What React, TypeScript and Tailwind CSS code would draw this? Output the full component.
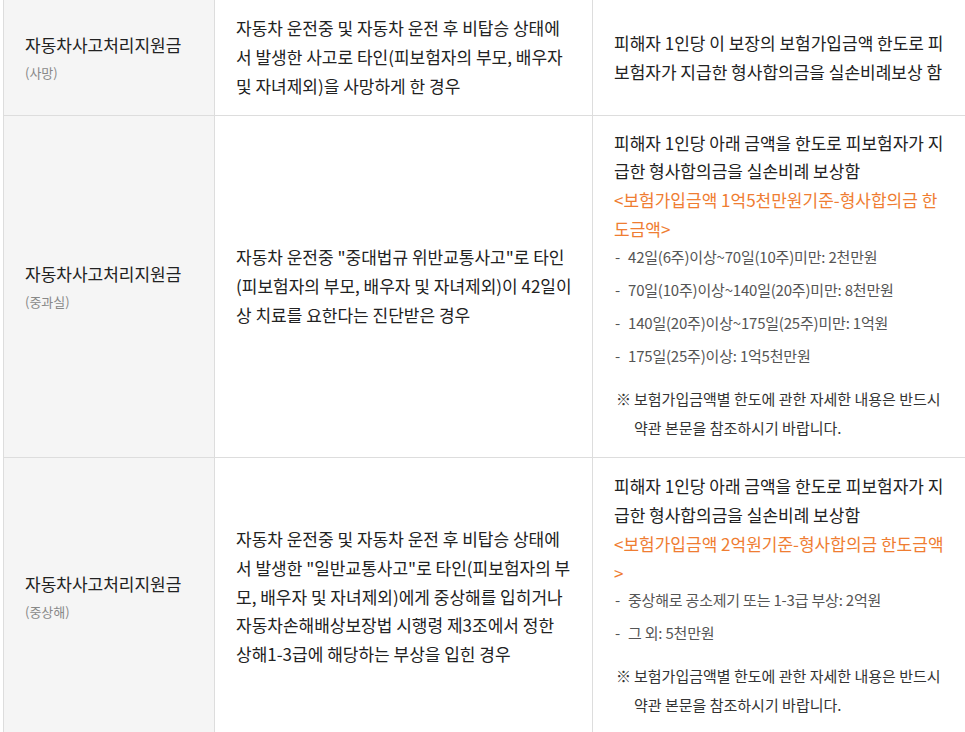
import React from 'react';

interface Coverage {
  title: string;
  sub: string;
  cause: string[];
  limit: string[];
  orange?: string[];
  items?: string[];
  height: string;
}

const NOTE = ['보험가입금액별 한도에 관한 자세한 내용은 반드시', '약관 본문을 참조하시기 바랍니다.'];

const rows: Coverage[] = [
  {
    title: '자동차사고처리지원금',
    sub: '(사망)',
    cause: [
      '자동차 운전중 및 자동차 운전 후 비탑승 상태에',
      '서 발생한 사고로 타인(피보험자의 부모, 배우자',
      '및 자녀제외)을 사망하게 한 경우',
    ],
    limit: ['피해자 1인당 이 보장의 보험가입금액 한도로 피', '보험자가 지급한 형사합의금을 실손비례보상 함'],
    height: 'h-[116px]',
  },
  {
    title: '자동차사고처리지원금',
    sub: '(중과실)',
    cause: [
      '자동차 운전중 "중대법규 위반교통사고"로 타인',
      '(피보험자의 부모, 배우자 및 자녀제외)이 42일이',
      '상 치료를 요한다는 진단받은 경우',
    ],
    limit: ['피해자 1인당 아래 금액을 한도로 피보험자가 지', '급한 형사합의금을 실손비례 보상함'],
    orange: ['<보험가입금액 1억5천만원기준-형사합의금 한', '도금액>'],
    items: [
      '42일(6주)이상~70일(10주)미만: 2천만원',
      '70일(10주)이상~140일(20주)미만: 8천만원',
      '140일(20주)이상~175일(25주)미만: 1억원',
      '175일(25주)이상: 1억5천만원',
    ],
    height: 'h-[342px]',
  },
  {
    title: '자동차사고처리지원금',
    sub: '(중상해)',
    cause: [
      '자동차 운전중 및 자동차 운전 후 비탑승 상태에',
      '서 발생한 "일반교통사고"로 타인(피보험자의 부',
      '모, 배우자 및 자녀제외)에게 중상해를 입히거나',
      '자동차손해배상보장법 시행령 제3조에서 정한',
      '상해1-3급에 해당하는 부상을 입힌 경우',
    ],
    limit: ['피해자 1인당 아래 금액을 한도로 피보험자가 지', '급한 형사합의금을 실손비례 보상함'],
    orange: ['<보험가입금액 2억원기준-형사합의금 한도금액', '>'],
    items: ['중상해로 공소제기 또는 1-3급 부상: 2억원', '그 외: 5천만원'],
    height: 'h-[279px]',
  },
];

const Lines: React.FC<{ lines: string[] }> = ({ lines }) => (
  <>
    {lines.map((l, i) => (
      <React.Fragment key={i}>
        {i > 0 && <br />}
        {l}
      </React.Fragment>
    ))}
  </>
);

export default function App() {
  return (
    <div className="w-[965px] h-[732px] overflow-hidden bg-white font-['Noto_Sans_CJK_KR','Noto_Sans',sans-serif] text-[#222]">
      <div className="ml-[3px] w-[968px]">
        {rows.map((r, idx) => (
          <div key={idx} className={`grid grid-cols-[212px_378px_378px] border-b border-[#ddd] ${r.height}`}>
            <div className="flex flex-col justify-center bg-[#f5f5f5] border-l border-r border-[#ddd] pl-[21px]">
              <div className="text-[17px] leading-[26px]">{r.title}</div>
              <div className="mt-1 text-[13px] leading-[22px] text-[#888]">{r.sub}</div>
            </div>
            <div className="flex items-center border-r border-[#ddd] pl-[21px] pr-[16px]">
              <p className="text-[17px] leading-[28.8px]">
                <Lines lines={r.cause} />
              </p>
            </div>
            <div className={`flex flex-col justify-center pl-[21px] pr-[16px] ${r.items ? 'pb-[2px]' : ''}`}>
              <p className="text-[17px] leading-[28.8px]">
                <Lines lines={r.limit} />
                {r.orange && (
                  <>
                    <br />
                    <span className="text-[#ef7d32]">
                      <Lines lines={r.orange} />
                    </span>
                  </>
                )}
              </p>
              {r.items && (
                <>
                  <ul className="mt-[1px] flex flex-col gap-[9px]">
                    {r.items.map((it) => (
                      <li key={it} className="relative pl-[14px] text-[15px] leading-[24px] text-[#555] tracking-[-0.2px]">
                        <span className="absolute left-[1px] top-0">-</span>
                        {it}
                      </li>
                    ))}
                  </ul>
                  <p className="relative mt-[17px] pl-[20px] text-[15px] leading-[28.8px] text-[#333]">
                    <span className="absolute left-[2px] top-0">※</span>
                    <Lines lines={NOTE} />
                  </p>
                </>
              )}
            </div>
          </div>
        ))}
      </div>
    </div>
  );
}
